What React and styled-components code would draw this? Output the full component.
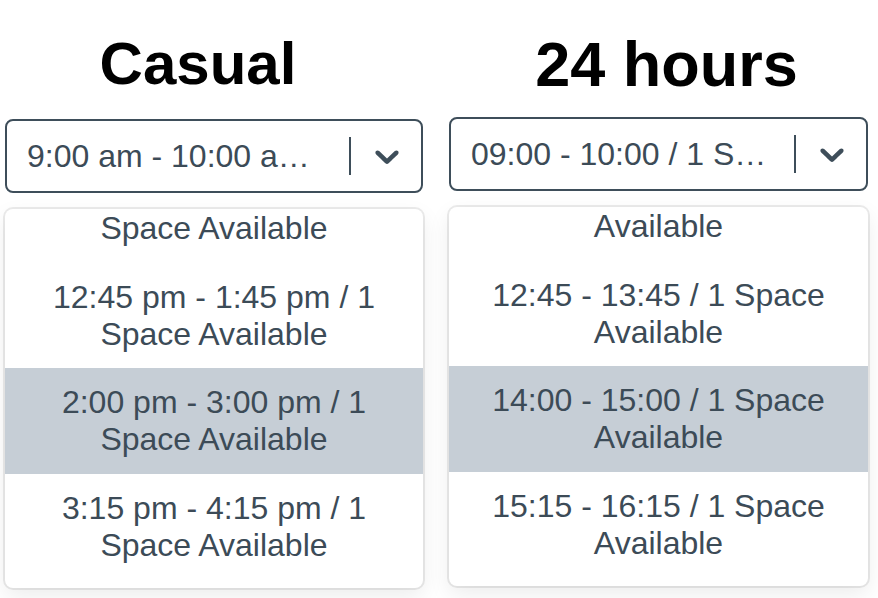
import React, { useLayoutEffect, useRef } from "react";
import styled, { createGlobalStyle } from "styled-components";

const Global = createGlobalStyle`
  html, body { margin: 0; padding: 0; background: #ffffff; }
  body { font-family: "Liberation Sans", Arial, Helvetica, sans-serif; }
  * { box-sizing: border-box; }
`;

const Page = styled.div`
  display: grid;
  grid-template-columns: 418px 419px;
  column-gap: 26px;
  padding: 29px 0 0 5px;
  width: 878px;
  height: 598px;
  overflow: hidden;
`;

const Column = styled.section`
  display: flex;
  flex-direction: column;
`;

const Title = styled.h1`
  margin: 0;
  height: 70px;
  line-height: 70px;
  font-size: ${(p) => p.$size}px;
  font-weight: 700;
  color: #000;
  text-align: center;
  padding-left: ${(p) => (p.$shift > 0 ? p.$shift * 2 : 0)}px;
  padding-right: ${(p) => (p.$shift < 0 ? -p.$shift * 2 : 0)}px;
  white-space: nowrap;
`;

const Control = styled.div`
  margin-top: ${(p) => p.$gap}px;
  height: 74px;
  border: 2px solid #3e4e5a;
  border-radius: 8px;
  display: flex;
  align-items: center;
  background: #fff;
`;

const Value = styled.div`
  flex: 1;
  min-width: 0;
  padding: 4px 16px 4px 20px;
  font-size: 32px;
  color: #3c4b57;
  white-space: nowrap;
  overflow: hidden;
  text-overflow: ellipsis;
`;

const Separator = styled.span`
  align-self: stretch;
  width: 2px;
  margin: 16px 0;
  background: #3e4e5a;
`;

const Indicator = styled.div`
  display: flex;
  align-items: center;
  justify-content: center;
  padding: 0 14px 0 16px;
  color: #3e4e5a;
`;

const Menu = styled.div`
  margin-top: 16px;
  height: 379px;
  border-radius: 8px;
  background: #fff;
  box-shadow: 0 0 0 2px rgba(0, 0, 0, 0.08), 0 8px 22px rgba(0, 0, 0, 0.08);
  overflow: hidden;
`;

const List = styled.div`
  height: 100%;
  padding: 8px 0;
  overflow-y: auto;
  scrollbar-width: none;
  &::-webkit-scrollbar { display: none; }
`;

const Option = styled.div`
  padding: 16px 24px;
  font-size: 32px;
  line-height: 36.8px;
  text-align: center;
  color: #3c4b57;
  background: ${(p) => (p.$focused ? "#c6ced6" : "transparent")};
`;

const Chevron = () => (
  <svg width="40" height="40" viewBox="0 0 20 20" aria-hidden="true" focusable="false">
    <path
      fill="currentColor"
      d="M4.516 7.548c0.436-0.446 1.043-0.481 1.576 0l3.908 3.747 3.908-3.747c0.533-0.481 1.141-0.446 1.574 0 0.436 0.445 0.408 1.197 0 1.615-0.406 0.418-4.695 4.502-4.695 4.502-0.217 0.223-0.502 0.335-0.787 0.335s-0.57-0.112-0.789-0.335c0 0-4.287-4.084-4.695-4.502s-0.436-1.17 0-1.615z"
    />
  </svg>
);

const casual = [
  "9:00 am - 10:00 am / 1 Space Available",
  "10:15 am - 11:15 am / 1 Space Available",
  "11:30 am - 12:30 pm / 1 Space Available",
  "12:45 pm - 1:45 pm / 1 Space Available",
  "2:00 pm - 3:00 pm / 1 Space Available",
  "3:15 pm - 4:15 pm / 1 Space Available",
];

const h24 = [
  "09:00 - 10:00 / 1 Space Available",
  "10:15 - 11:15 / 1 Space Available",
  "11:30 - 12:30 / 1 Space Available",
  "12:45 - 13:45 / 1 Space Available",
  "14:00 - 15:00 / 1 Space Available",
  "15:15 - 16:15 / 1 Space Available",
];

function TimeSelect({ title, size, shift, gap, options, focused }) {
  const listRef = useRef(null);
  useLayoutEffect(() => {
    const el = listRef.current;
    if (el) el.scrollTop = el.scrollHeight;
  }, []);
  return (
    <Column>
      <Title $size={size} $shift={shift}>{title}</Title>
      <Control $gap={gap}>
        <Value>{options[0]}</Value>
        <Separator />
        <Indicator>
          <Chevron />
        </Indicator>
      </Control>
      <Menu>
        <List ref={listRef}>
          {options.map((o, i) => (
            <Option key={o} $focused={i === focused}>
              {o}
            </Option>
          ))}
        </List>
      </Menu>
    </Column>
  );
}

export default function App() {
  return (
    <>
      <Global />
      <Page>
        <TimeSelect title="Casual" size={60} shift={-16} gap={20} options={casual} focused={4} />
        <TimeSelect title="24 hours" size={63} shift={8} gap={18} options={h24} focused={4} />
      </Page>
    </>
  );
}
